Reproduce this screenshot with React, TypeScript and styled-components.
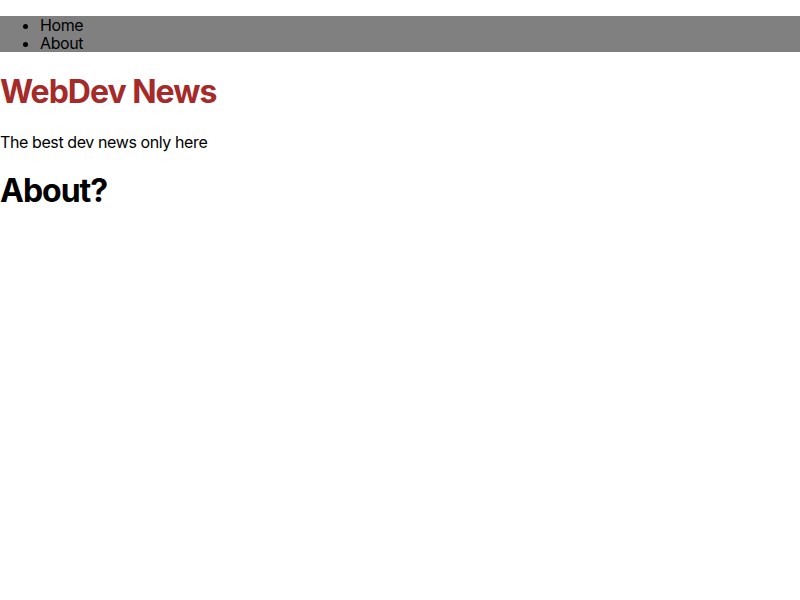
import React, { FC } from 'react';
import styled, { createGlobalStyle } from 'styled-components';

const GlobalStyle = createGlobalStyle`
  body {
    margin: 0;
    font-family: Inter, "Noto Sans", sans-serif;
    font-size: 16px;
    line-height: 18px;
    letter-spacing: -0.4px;
    color: #000;
    background: #fff;
  }
`;

const NavList = styled.ul`
  background-color: gray;
  margin: 16px 0;
  padding-left: 40px;
`;

const NavItem = styled.li`
  & a {
    color: inherit;
    text-decoration: none;
  }
`;

const Title = styled.h1<{ $accent?: boolean }>`
  font-size: 32px;
  font-weight: 700;
  line-height: 38px;
  letter-spacing: -1px;
  margin: 21.44px 0;
  color: ${(p) => (p.$accent ? '#a52a2a' : '#000')};
`;

const Tagline = styled.p`
  margin: 16px 0;
`;

const App: FC = () => {
  return (
    <>
      <GlobalStyle />
      <nav>
        <NavList>
          <NavItem><a href="#">Home</a></NavItem>
          <NavItem><a href="#">About</a></NavItem>
        </NavList>
      </nav>
      <header>
        <Title $accent>WebDev News</Title>
        <Tagline>The best dev news only here</Tagline>
      </header>
      <main>
        <Title>About?</Title>
      </main>
    </>
  );
};

export default App;
